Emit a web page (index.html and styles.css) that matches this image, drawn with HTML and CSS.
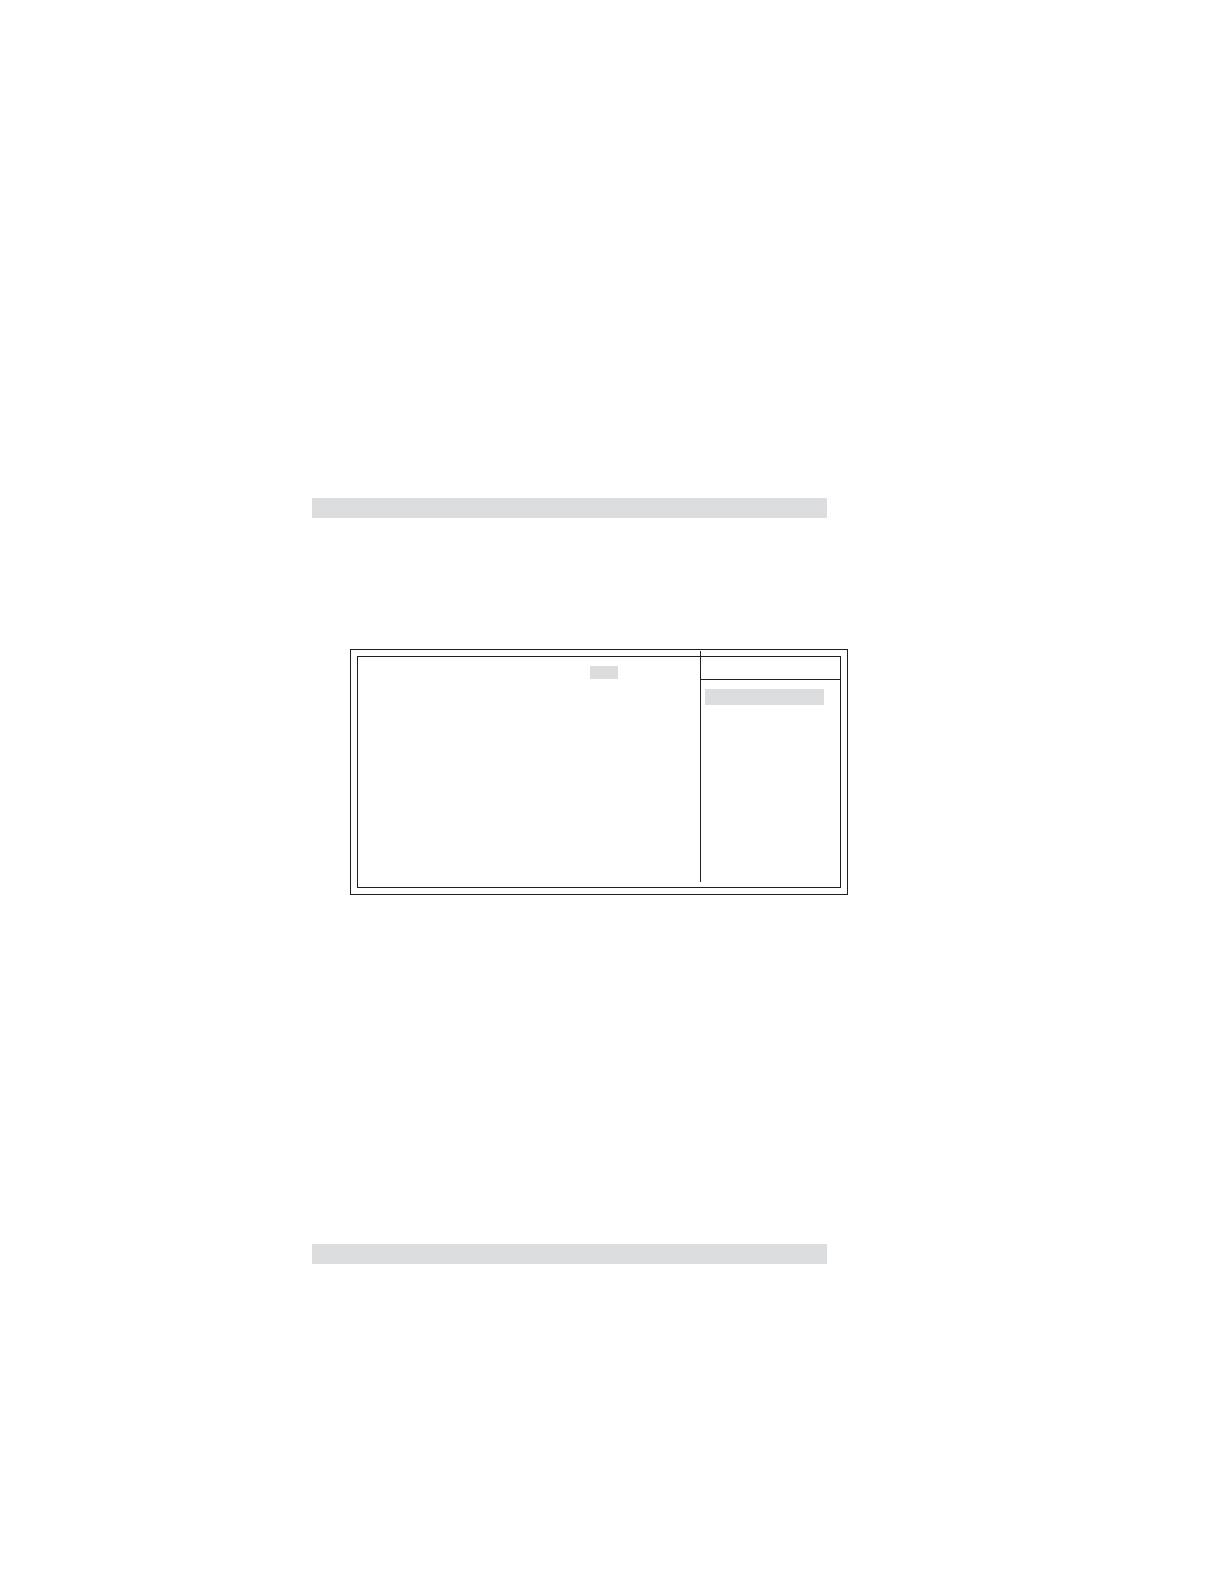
FILE: index.html
```html
<!DOCTYPE html>
<html lang="en">
<head>
  <meta charset="UTF-8">
  <meta name="viewport" content="width=device-width, initial-scale=1.0">
  <title>Setup Screen</title>
  <link rel="stylesheet" href="styles.css">
</head>
<body>
  <main class="page">
    <div class="bar"></div>

    <!-- Setup screen -->
    <section class="screen">
      <div class="panel">
        <div class="options">
          <div class="value"></div>
        </div>
        <div class="help">
          <div class="help-title"></div>
          <div class="help-item"></div>
        </div>
      </div>
    </section>

    <div class="bar"></div>
  </main>
</body>
</html>
```

FILE: styles.css
```css
* {
  box-sizing: border-box;
}

body {
  margin: 0;
  background: #ffffff;
  font-family: "Liberation Sans", Arial, sans-serif;
}

.page {
  min-height: 100vh;
  padding: 498px 397px 320px 312px;
}

.bar {
  height: 20px;
  background: #dcddde;
}

/* Double frame */
.screen {
  margin: 131px -21px 349px 38px;
  padding: 6px;
  border: 1px solid #231f20;
}

.panel {
  display: flex;
  min-height: 232px;
  border: 1px solid #231f20;
}

.options {
  flex: 1;
  display: flex;
  justify-content: flex-end;
  padding: 9px 82px 9px 9px;
}

.value {
  width: 28px;
  height: 13px;
  background: #dcddde;
}

.help {
  position: relative;
  width: 140px;
}

/* Divider runs up past the inner frame and stops short of its bottom */
.help::before {
  content: "";
  position: absolute;
  top: -6px;
  bottom: 5px;
  left: 0;
  width: 1px;
  background: #231f20;
}

.help-title {
  height: 23px;
  border-bottom: 1px solid #231f20;
}

.help-item {
  height: 16px;
  margin: 9px 16px 0 5px;
  background: #dcddde;
}

@media (max-width: 900px) {
  .page {
    padding: 80px 24px;
  }

  .screen {
    margin: 80px 0;
  }

  .options {
    padding-right: 24px;
  }
}
```
